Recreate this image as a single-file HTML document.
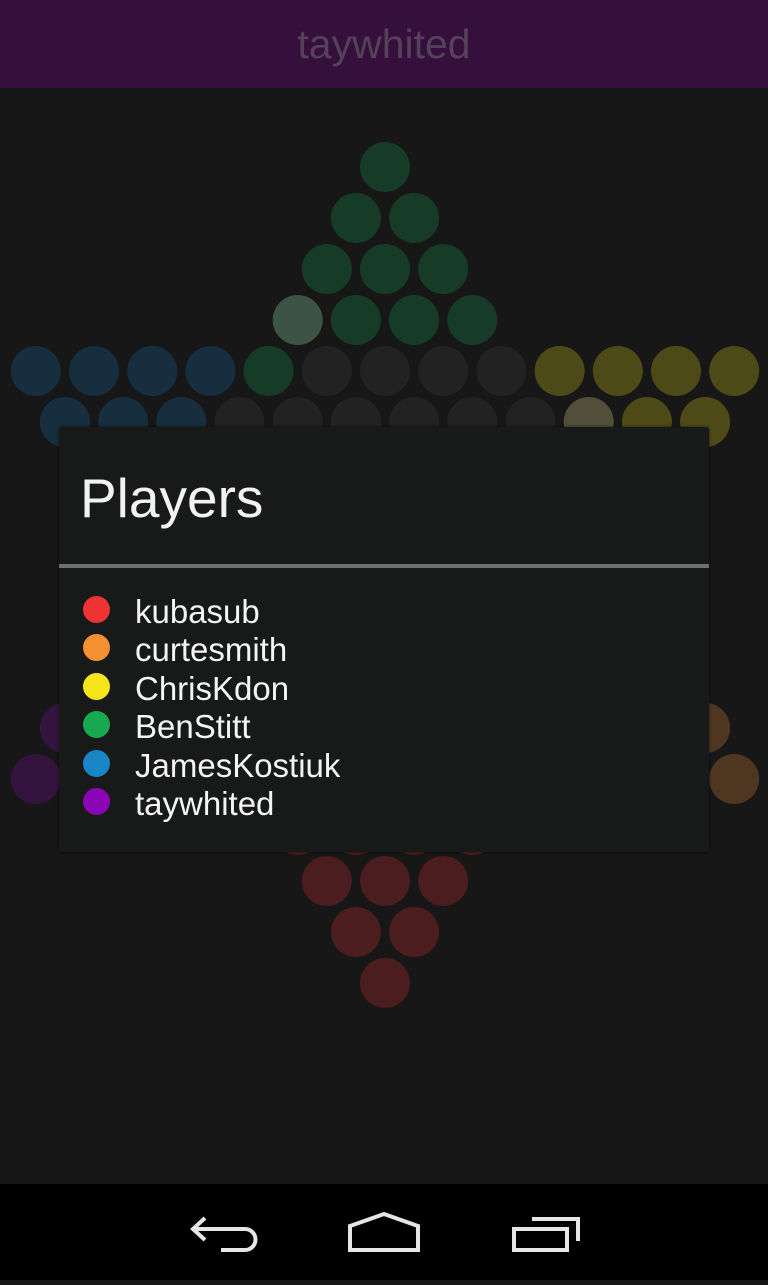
<!DOCTYPE html>
<html><head><meta charset="utf-8">
<style>
html,body{margin:0;padding:0;width:768px;height:1280px;overflow:hidden;background:#171717;font-family:"Liberation Sans",sans-serif;}
#top{position:absolute;left:0;top:0;width:768px;height:88px;background:#36103c;color:#54415a;font-size:41px;text-align:center;line-height:88px;}
#board{position:absolute;left:0;top:0;}
#dlg{position:absolute;left:59px;top:427px;width:650px;height:425px;background:#181919;border-radius:3px;box-shadow:0 0 3px rgba(0,0,0,.6);}
#dlg h1{position:absolute;left:21px;top:38px;margin:0;font-weight:normal;font-size:55px;color:#f2f2f2;line-height:1.2;}
#dlg .div{position:absolute;left:0;top:137px;width:650px;height:4px;background:#6e6e6e;}
.it{position:absolute;left:76px;font-size:33px;color:#f4f4f4;line-height:38px;height:38px;}
.dot{position:absolute;left:24px;width:27px;height:27px;border-radius:50%;}
#nav{position:absolute;left:0;top:1184px;width:768px;height:96px;background:#000;}
</style></head><body>
<svg id="board" width="768" height="1280" xmlns="http://www.w3.org/2000/svg"><g id="g"></g></svg>
<div id="top">taywhited</div>
<div id="dlg">
<h1>Players</h1>
<div class="div"></div>
<div class="dot" style="top:169px;background:#ee3333"></div><div class="it" style="top:166px">kubasub</div>
<div class="dot" style="top:207px;background:#f59131"></div><div class="it" style="top:204px">curtesmith</div>
<div class="dot" style="top:246px;background:#f7e51b"></div><div class="it" style="top:243px">ChrisKdon</div>
<div class="dot" style="top:284px;background:#18a84f"></div><div class="it" style="top:281px">BenStitt</div>
<div class="dot" style="top:323px;background:#1a85c4"></div><div class="it" style="top:320px">JamesKostiuk</div>
<div class="dot" style="top:361px;background:#8a06b4"></div><div class="it" style="top:358px">taywhited</div>
</div>
<div id="nav">
<svg width="768" height="96" xmlns="http://www.w3.org/2000/svg" fill="none" stroke="#e6e6e6" stroke-width="4">
<path d="M205 34 L193 45 L205 56 M193 45 L245 45 A10.5 10.5 0 0 1 245 66 L221 66"/>
<path d="M350 66 L350 42 L384 30 L418 42 L418 66 Z"/>
<path d="M514 45 L567 45 L567 66 L514 66 Z M532 35 L578 35 L578 57"/>
</svg>
</div>
<script>
var g=document.getElementById('g');
var widths=[1,2,3,4,13,12,11,10,9,10,11,12,13,4,3,2,1];
var E='#222222',G='#163b27',B='#172e3e',Y='#4d4a18',R='#4b1d1e',P='#35133f',O='#4f3620';
var s='';
for(var r=0;r<17;r++){var n=widths[r];var y=167+51*r;
for(var i=0;i<n;i++){var x=385+(i-(n-1)/2)*58.2;var c=E;
if(r<4)c=G;else if(r>12)c=R;
else{var k=r<=8?(r-4):(12-r);var corner=4-k;
if(r<=8){if(i<corner)c=B;else if(i>=n-corner)c=Y;}
else{var cc=r-8;if(i<cc)c=P;else if(i>=n-cc)c=O;}}
if(r==3&&i==0)c='#3d5346';
if(r==4&&i==4)c=G;
if(r==5&&i==9)c='#514f3a';
s+='<ellipse cx="'+x+'" cy="'+y+'" rx="25" ry="25" fill="'+c+'"/>';}}
g.innerHTML=s;
</script>
</body></html>
